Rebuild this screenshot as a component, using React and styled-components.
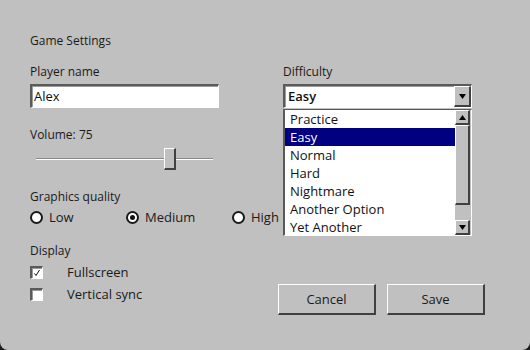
import React from "react";
import styled, { createGlobalStyle } from "styled-components";

const Global = createGlobalStyle`
  html, body { margin: 0; padding: 0; background: #1c1c1c; }
  body { font-family: "Open Sans", "Noto Sans", sans-serif; }
`;

const Window = styled.div`
  width: 530px;
  height: 350px;
  box-sizing: border-box;
  background: #c0c0c0;
  border-radius: 0 0 8px 8px;
  padding: 33px 0 0 30px;
  color: #1a1a1a;
  font-size: 12px;
  position: relative;
`;

const Title = styled.div`
  height: 16px;
  line-height: 16px;
  margin-bottom: 15px;
`;

const Columns = styled.div`
  display: grid;
  grid-template-columns: 253px 189px;
`;

const Label = styled.div`
  height: 16px;
  line-height: 16px;
  margin-bottom: ${(p) => p.$mb ?? 4}px;
`;

const Sunken = styled.div`
  box-sizing: border-box;
  background: #fff;
  border-style: solid;
  border-width: 2px 1px 1px 2px;
  border-color: #5a5a5a #ffffff #ffffff #5a5a5a;
  box-shadow: inset 1px 1px 0 #9a9a9a;
`;

const TextInput = styled(Sunken)`
  width: 189px;
  height: 24px;
  line-height: 20px;
  padding-left: 2px;
  font-size: 13px;
  color: #111;
`;

const SliderWrap = styled.div`
  position: relative;
  width: 189px;
  height: 22px;
  margin-top: 5px;
  display: flex;
  align-items: center;
`;

const Track = styled.div`
  margin-left: 6px;
  width: 177px;
  height: 1px;
  background: #8a8a8a;
  border-bottom: 1px solid #ffffff;
`;

const Thumb = styled.div`
  position: absolute;
  top: 0;
  left: ${(p) => p.$left}px;
  width: 12px;
  height: 22px;
  box-sizing: border-box;
  background: #c0c0c0;
  border-style: solid;
  border-width: 1px 2px 2px 1px;
  border-color: #ffffff #404040 #404040 #ffffff;
`;

const Section = styled.div`
  margin-top: ${(p) => p.$mt}px;
`;

const RadioRow = styled.div`
  display: flex;
  align-items: center;
  height: 16px;
`;

const RadioOption = styled.div`
  display: flex;
  align-items: center;
  width: ${(p) => (p.$w ? `${p.$w}px` : "auto")};
  gap: 6px;
`;

const RadioCircle = styled.span`
  width: 13px;
  height: 13px;
  box-sizing: border-box;
  border-radius: 50%;
  background: #fff;
  border: 2px solid #1a1a1a;
  display: flex;
  align-items: center;
  justify-content: center;
  &::after {
    content: "";
    display: ${(p) => (p.$checked ? "block" : "none")};
    width: 5px;
    height: 5px;
    border-radius: 50%;
    background: #111;
  }
`;

const OptionText = styled.span`
  font-size: 13px;
`;

const CheckRow = styled.div`
  display: flex;
  align-items: center;
  height: 16px;
  margin-bottom: 6px;
`;

const CheckBox = styled(Sunken)`
  width: 13px;
  height: 13px;
  margin-right: 24px;
  display: flex;
  align-items: center;
  justify-content: center;
`;

const SelectBox = styled(Sunken)`
  position: relative;
  width: 189px;
  height: 24px;
  display: flex;
`;

const SelectValue = styled.div`
  flex: 1;
  padding-left: 3px;
  line-height: 21px;
  font-size: 13px;
  font-weight: 600;
  color: #111;
`;

const RaisedBtn = styled.div`
  box-sizing: border-box;
  background: #c0c0c0;
  border-style: solid;
  border-width: 1px 2px 2px 1px;
  border-color: #ffffff #404040 #404040 #ffffff;
  display: flex;
  align-items: center;
  justify-content: center;
`;

const SelectArrow = styled(RaisedBtn)`
  width: 17px;
  height: 21px;
`;

const DropList = styled.div`
  position: absolute;
  top: 23px;
  left: -2px;
  width: 189px;
  height: 127px;
  box-sizing: border-box;
  background: #fff;
  border-style: solid;
  border-width: 1px 1px 1px 2px;
  border-color: #5a5a5a #ffffff #ffffff #5a5a5a;
  display: flex;
  overflow: hidden;
  z-index: 2;
`;

const Items = styled.div`
  flex: 1;
`;

const Item = styled.div`
  height: 18px;
  line-height: 18px;
  padding-left: 5px;
  font-size: 13px;
  background: ${(p) => (p.$sel ? "#000080" : "transparent")};
  color: ${(p) => (p.$sel ? "#ffffff" : "#111")};
`;

const ScrollBar = styled.div`
  width: 16px;
  background: #c0c0c0;
  display: flex;
  flex-direction: column;
`;

const ScrollBtn = styled(RaisedBtn)`
  width: 15px;
  height: 15px;
  flex: none;
`;

const ScrollThumb = styled(RaisedBtn)`
  width: 15px;
  height: 80px;
  flex: none;
`;

const ScrollSpace = styled.div`
  flex: 1;
`;

const Buttons = styled.div`
  position: absolute;
  right: 45px;
  bottom: 35px;
  display: flex;
  gap: 11px;
`;

const Button = styled.button`
  width: 98px;
  height: 31px;
  box-sizing: border-box;
  background: #c0c0c0;
  border-style: solid;
  border-width: 1px 2px 2px 1px;
  border-color: #ffffff #404040 #404040 #ffffff;
  font-family: inherit;
  font-size: 13px;
  color: #1a1a1a;
  padding: 0;
`;

const Tri = ({ up }) => (
  <svg width="7" height="5" viewBox="0 0 7 5">
    <path d={up ? "M0 5 L3.5 0 L7 5 Z" : "M0 0 L7 0 L3.5 5 Z"} fill="#000" />
  </svg>
);

const items = ["Practice", "Easy", "Normal", "Hard", "Nightmare", "Another Option", "Yet Another"];

export default function App() {
  return (
    <>
      <Global />
      <Window>
        <Title>Game Settings</Title>
        <Columns>
          <div>
            <Label>Player name</Label>
            <TextInput>Alex</TextInput>
            <Section $mt={19}>
              <Label $mb={0}>Volume: 75</Label>
              <SliderWrap>
                <Track />
                <Thumb $left={134} />
              </SliderWrap>
            </Section>
            <Section $mt={19}>
              <Label $mb={4}>Graphics quality</Label>
              <RadioRow>
                <RadioOption $w={96}>
                  <RadioCircle />
                  <OptionText>Low</OptionText>
                </RadioOption>
                <RadioOption $w={106}>
                  <RadioCircle $checked />
                  <OptionText>Medium</OptionText>
                </RadioOption>
                <RadioOption>
                  <RadioCircle />
                  <OptionText>High</OptionText>
                </RadioOption>
              </RadioRow>
            </Section>
            <Section $mt={18}>
              <Label $mb={5}>Display</Label>
              <CheckRow>
                <CheckBox>
                  <svg width="8" height="8" viewBox="0 0 8 8">
                    <path d="M1.5 4.5 L3 6.5 L6.5 1" stroke="#111" strokeWidth="1" fill="none" />
                  </svg>
                </CheckBox>
                <OptionText>Fullscreen</OptionText>
              </CheckRow>
              <CheckRow>
                <CheckBox />
                <OptionText>Vertical sync</OptionText>
              </CheckRow>
            </Section>
          </div>
          <div>
            <Label>Difficulty</Label>
            <SelectBox>
              <SelectValue>Easy</SelectValue>
              <SelectArrow>
                <Tri />
              </SelectArrow>
              <DropList>
                <Items>
                  {items.map((t) => (
                    <Item key={t} $sel={t === "Easy"}>
                      {t}
                    </Item>
                  ))}
                </Items>
                <ScrollBar>
                  <ScrollBtn>
                    <Tri up />
                  </ScrollBtn>
                  <ScrollThumb />
                  <ScrollSpace />
                  <ScrollBtn>
                    <Tri />
                  </ScrollBtn>
                </ScrollBar>
              </DropList>
            </SelectBox>
          </div>
        </Columns>
        <Buttons>
          <Button>Cancel</Button>
          <Button>Save</Button>
        </Buttons>
      </Window>
    </>
  );
}
